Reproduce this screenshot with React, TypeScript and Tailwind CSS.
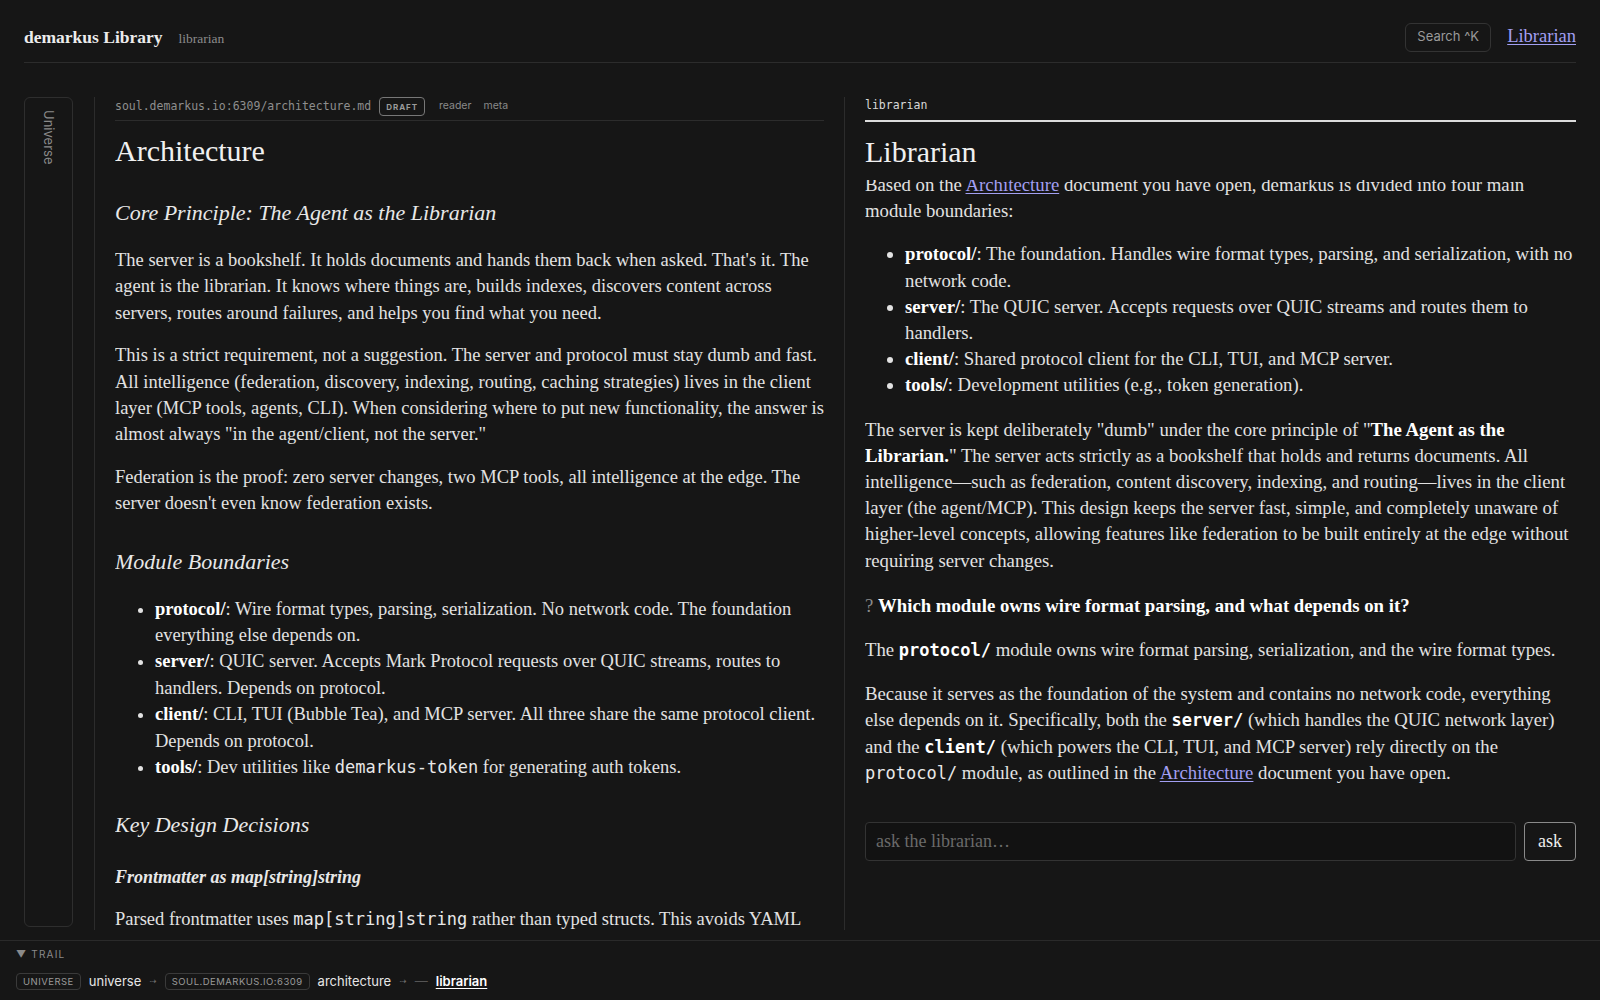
import { ReactNode } from 'react'

const serif = "font-['Liberation_Serif','Times_New_Roman',serif]"
const mono = "font-['DejaVu_Sans_Mono','Liberation_Mono',monospace]"
const sans = "font-['Inter','Liberation_Sans',sans-serif]"

function Code({ children, bold }: { children: ReactNode; bold?: boolean }) {
  return (
    <code className={`${mono} text-[17px] ${bold ? 'font-bold text-white' : 'text-[#e8e8e8]'}`}>{children}</code>
  )
}

function Link({ children }: { children: ReactNode }) {
  return <a className="text-[#a29ff2] underline underline-offset-2 decoration-1">{children}</a>
}

function Header() {
  return (
    <header className="px-6">
      <div className="h-[63px] pt-3 flex items-center border-b border-[#2c2c2c]">
        <div className={`${serif} text-[17.5px] font-bold text-[#ececec]`}>demarkus Library</div>
        <div className={`${serif} text-[13.5px] text-[#8c8c8c] ml-4 mt-1`}>librarian</div>
        <div className="flex-1" />
        <button
          type="button"
          className={`${sans} h-[29px] w-[86px] rounded-md border border-[#333] text-[13px] text-[#9a9a9a] mr-4`}
        >
          Search ^K
        </button>
        <a className={`${serif} text-[18.5px] text-[#a29ff2] underline underline-offset-2`}>Librarian</a>
      </div>
    </header>
  )
}

function DocPane() {
  return (
    <section className="w-[750px] shrink-0 border-l border-[#2c2c2c] px-5 flex flex-col min-h-0">
      <div className="h-[24px] flex items-start gap-2 border-b border-[#2c2c2c]">
        <span className={`${mono} text-[11.5px] leading-4 mt-px text-[#8e8e8e]`}>soul.demarkus.io:6309/architecture.md</span>
        <span
          className={`${sans} h-[19px] px-1.5 flex items-center rounded border border-[#777] text-[8px] font-bold tracking-[0.12em] text-[#9a9a9a]`}
        >
          DRAFT
        </span>
        <span className={`${sans} text-[10.5px] leading-4 mt-px text-[#8a8a8a] ml-1.5`}>reader</span>
        <span className={`${sans} text-[10.5px] leading-4 mt-px text-[#8a8a8a] ml-1`}>meta</span>
      </div>

      <article className={`${serif} flex-1 min-h-0 overflow-hidden text-[18.5px] leading-[26.4px] text-[#e2e2e2]`}>
        <h1 className="mt-3 text-[30px] leading-[36px] text-[#f0f0f0]">Architecture</h1>
        <h2 className="mt-[29px] text-[22px] leading-[30px] italic text-[#e8e8e8]">
          Core Principle: The Agent as the Librarian
        </h2>
        <p className="mt-[19px] mb-[16px]">
          The server is a bookshelf. It holds documents and hands them back when asked. That's it. The agent is
          the librarian. It knows where things are, builds indexes, discovers content across servers, routes
          around failures, and helps you find what you need.
        </p>
        <p className="mb-[16px]">
          This is a strict requirement, not a suggestion. The server and protocol must stay dumb and fast. All
          intelligence (federation, discovery, indexing, routing, caching strategies) lives in the client layer
          (MCP tools, agents, CLI). When considering where to put new functionality, the answer is almost always
          "in the agent/client, not the server."
        </p>
        <p className="mb-[16px]">
          Federation is the proof: zero server changes, two MCP tools, all intelligence at the edge. The server
          doesn't even know federation exists.
        </p>
        <h2 className="mt-[30px] text-[22px] leading-[30px] italic text-[#e8e8e8]">Module Boundaries</h2>
        <ul className="mt-[19px] list-disc pl-10">
          <li>
            <b className="text-white">protocol/</b>: Wire format types, parsing, serialization. No network code.
            The foundation everything else depends on.
          </li>
          <li>
            <b className="text-white">server/</b>: QUIC server. Accepts Mark Protocol requests over QUIC streams,
            routes to handlers. Depends on protocol.
          </li>
          <li>
            <b className="text-white">client/</b>: CLI, TUI (Bubble Tea), and MCP server. All three share the same
            protocol client. Depends on protocol.
          </li>
          <li>
            <b className="text-white">tools/</b>: Dev utilities like <Code>demarkus-token</Code> for generating auth
            tokens.
          </li>
        </ul>
        <h2 className="mt-[29px] text-[22px] leading-[30px] italic text-[#e8e8e8]">Key Design Decisions</h2>
        <h3 className="mt-[24px] text-[18px] leading-[26px] italic font-bold text-[#e8e8e8]">
          Frontmatter as map[string]string
        </h3>
        <p className="mt-[16px]">
          Parsed frontmatter uses <Code>map[string]string</Code> rather than typed structs. This avoids YAML
          parsing surprises and keeps the wire format simple.
        </p>
      </article>
    </section>
  )
}

function LibrarianPane() {
  return (
    <section className="flex-1 min-w-0 border-l border-[#2c2c2c] pl-5 flex flex-col min-h-0">
      <div className="h-[25px] border-b-2 border-[#dcdcdc]">
        <span className={`${mono} block text-[11.5px] leading-4 text-[#d8d8d8]`}>librarian</span>
      </div>
      <h1 className={`${serif} mt-3 text-[30px] leading-[36px] text-[#f0f0f0]`}>Librarian</h1>

      <div className={`${serif} mt-[10px] h-[622px] overflow-hidden text-[18.75px] leading-[26.2px] text-[#e2e2e2]`}>
        <div className="-mt-[8px]">
          <p>
            Based on the <Link>Architecture</Link> document you have open, demarkus is divided into four main
            module boundaries:
          </p>
          <ul className="mt-[17px] list-disc pl-10">
            <li>
              <b className="text-white">protocol/</b>: The foundation. Handles wire format types, parsing, and
              serialization, with no network code.
            </li>
            <li>
              <b className="text-white">server/</b>: The QUIC server. Accepts requests over QUIC streams and routes
              them to handlers.
            </li>
            <li>
              <b className="text-white">client/</b>: Shared protocol client for the CLI, TUI, and MCP server.
            </li>
            <li>
              <b className="text-white">tools/</b>: Development utilities (e.g., token generation).
            </li>
          </ul>
          <p className="mt-[18px]">
            The server is kept deliberately "dumb" under the core principle of "
            <b className="text-white">The Agent as the Librarian.</b>" The server acts strictly as a bookshelf that
            holds and returns documents. All intelligence—such as federation, content discovery, indexing, and
            routing—lives in the client layer (the agent/MCP). This design keeps the server fast, simple, and
            completely unaware of higher-level concepts, allowing features like federation to be built entirely
            at the edge without requiring server changes.
          </p>
          <p className="mt-[19px]">
            <span className="text-[#8a8a8a]">?</span>{' '}
            <b className="text-white">Which module owns wire format parsing, and what depends on it?</b>
          </p>
          <p className="mt-[18px]">
            The <Code bold>protocol/</Code> module owns wire format parsing, serialization, and the wire format
            types.
          </p>
          <p className="mt-[18px]">
            Because it serves as the foundation of the system and contains no network code, everything else
            depends on it. Specifically, both the <Code bold>server/</Code> (which handles the QUIC network layer)
            and the <Code bold>client/</Code> (which powers the CLI, TUI, and MCP server) rely directly on the{' '}
            <Code>protocol/</Code> module, as outlined in the <Link>Architecture</Link> document you have open.
          </p>
        </div>
      </div>

      <form className="mt-[20px] flex gap-2" onSubmit={e => e.preventDefault()}>
        <input
          placeholder="ask the librarian…"
          className={`${serif} flex-1 h-[39px] rounded border border-[#333] bg-[#121212] px-2.5 text-[18px] text-[#ddd] placeholder:text-[#6a6a6a] outline-none`}
        />
        <button
          type="submit"
          className={`${serif} h-[39px] w-[52px] rounded border border-[#8a8a8a] text-[18px] text-[#eee]`}
        >
          ask
        </button>
      </form>
    </section>
  )
}

function Chip({ children }: { children: ReactNode }) {
  return (
    <span className="h-[17px] px-1.5 flex items-center rounded border border-[#3a3a3a] text-[9.5px] tracking-[0.05em] text-[#9a9a9a]">
      {children}
    </span>
  )
}

function Arrow() {
  return <span className="font-['DejaVu_Sans',sans-serif] text-[9px] text-[#6a6a6a]">⇢</span>
}

function Trail() {
  return (
    <footer className={`${sans} h-[60px] border-t border-[#2a2a2a] px-4 pt-[6px]`}>
      <div className="text-[10px] tracking-[0.12em] text-[#8a8a8a]">▼ TRAIL</div>
      <div className="mt-[10px] flex items-center gap-2 text-[13px] text-[#e6e6e6]">
        <Chip>UNIVERSE</Chip>
        <span>universe</span>
        <Arrow />
        <Chip>SOUL.DEMARKUS.IO:6309</Chip>
        <span>architecture</span>
        <Arrow />
        <span className="text-[#555]">—</span>
        <span className="font-semibold text-white underline underline-offset-2">librarian</span>
      </div>
    </footer>
  )
}

export default function App() {
  return (
    <div className="h-screen flex flex-col bg-[#161616] text-[#e2e2e2] overflow-hidden">
      <Header />
      <main className="flex-1 min-h-0 px-6 pt-[34px] pb-[10px] flex">
        <aside className="w-[49px] shrink-0 mr-[21px] mb-[3px] rounded-md border border-[#2e2e2e] flex justify-center pt-3">
          <span className={`${sans} text-[13px] text-[#8a8a8a] [writing-mode:vertical-rl]`}>Universe</span>
        </aside>
        <DocPane />
        <LibrarianPane />
      </main>
      <Trail />
    </div>
  )
}
